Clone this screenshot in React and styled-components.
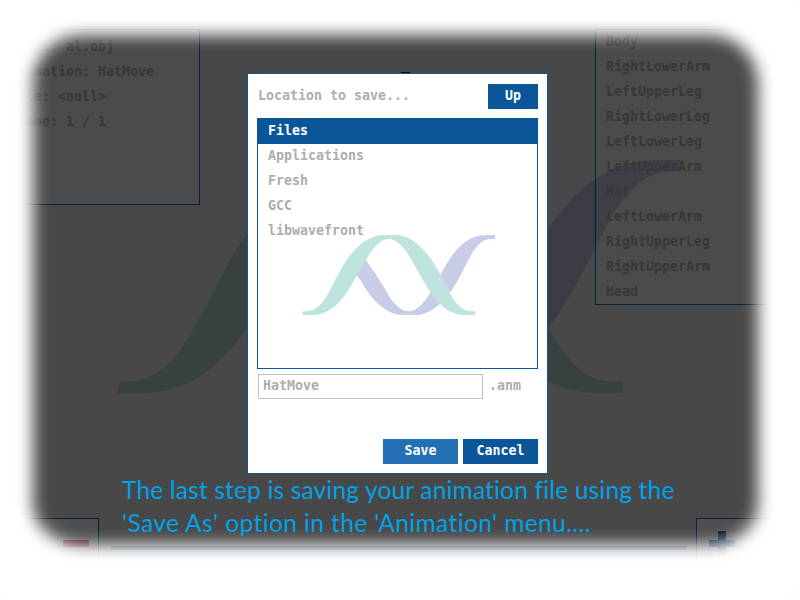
import React from 'react';
import styled, { createGlobalStyle } from 'styled-components';

const Global = createGlobalStyle`
  * { box-sizing: border-box; }
  body { margin: 0; background: #fff; }
`;

const Page = styled.main`
  position: relative;
  width: 800px;
  height: 600px;
  overflow: hidden;
  background: #fff;
  font: bold 13.29px/23px "DejaVu Sans Mono", monospace;
`;

const Editor = styled.section`
  position: relative;
  height: 600px;
  display: flex;
  flex-direction: column;
  justify-content: space-between;
  padding-top: 29px;
  background: #484848;
`;

const PanelRow = styled.div`
  display: flex;
  justify-content: space-between;
  align-items: flex-start;
`;

const Panel = styled.div`
  position: relative;
  width: ${(p) => p.$width}px;
  height: ${(p) => p.$height}px;
  padding: ${(p) => p.$pad};
  border: 1px solid #04203a;
  background: rgba(255, 255, 255, 0.02);
  color: #373737;
  white-space: pre;
`;

const Line = styled.div`
  height: 25px;
  line-height: 24px;
`;

const BottomRow = styled.div`
  display: flex;
  height: 82px;
`;

const ZoomBox = styled.div`
  width: ${(p) => p.$width}px;
  padding: ${(p) => p.$pad};
  border: 1px solid #04203a;
  background: rgba(255, 255, 255, 0.04);
`;

const Track = styled.div`
  flex: 1;
  height: 4px;
  margin: 28px 9px 0 12px;
  background: #0a2238;
`;

const Fade = styled.div`
  position: absolute;
  inset: -48px -41px -36px -50px;
  border: solid #fff;
  border-width: 83px 83px 91px 83px;
  border-radius: 132px;
  box-shadow: 0 0 0 100px #fff;
  filter: blur(8px);
`;

const BackdropWave = styled.div`
  position: absolute;
  left: 116.5px;
  top: 159.7px;
  svg { display: block; }
`;

const Marker = styled.div`
  position: absolute;
  left: 401px;
  top: 72px;
  width: 9px;
  height: 2px;
  background: #0a0a2c;
`;

const Dialog = styled.section`
  position: absolute;
  left: 247px;
  top: 73px;
  width: 301px;
  height: 401px;
  padding: 10px 9px 9px;
  display: flex;
  flex-direction: column;
  border: 1px solid #0a5699;
  background: #fff;
  color: #adadad;
`;

const DialogHead = styled.header`
  display: flex;
  justify-content: space-between;
  height: 25px;
  padding-left: 1px;
  margin-bottom: 9px;
`;

const Button = styled.button`
  width: ${(p) => p.$width}px;
  height: 25px;
  padding: 0 0 2px;
  border: 0;
  background: ${(p) => (p.$active ? '#2370b5' : '#0a5699')};
  color: #fff;
  font: inherit;
  text-align: center;
`;

const FileList = styled.div`
  position: relative;
  height: 251px;
  border: 1px solid #0a5699;
`;

const FileRow = styled.div`
  position: relative;
  height: 25px;
  padding-left: 10px;
  background: ${(p) => (p.$selected ? '#0a5699' : 'transparent')};
  color: ${(p) => (p.$selected ? '#fff' : 'inherit')};
`;

const ListWave = styled.div`
  position: absolute;
  left: 43.7px;
  top: 115.6px;
  svg { display: block; }
`;

const NameRow = styled.div`
  display: flex;
  margin-top: 5px;
  padding-left: 1px;
  gap: 6px;
`;

const NameInput = styled.input`
  width: 225px;
  height: 25px;
  padding: 0 4px 2px;
  border: 1px solid #c0c0c0;
  border-radius: 0;
  outline: 0;
  color: inherit;
  background: #fff;
  font: inherit;
  line-height: 21px;
`;

const Actions = styled.footer`
  display: flex;
  justify-content: flex-end;
  gap: 5px;
  margin-top: auto;
`;

const Caption = styled.p`
  position: absolute;
  left: 122px;
  top: 473px;
  margin: 0;
  color: #00a2e8;
  font: 400 24.5px/33px Lato, sans-serif;
  font-variant-ligatures: none;
  white-space: nowrap;
`;

const CaptionLine = styled.span`
  display: block;
  letter-spacing: ${(p) => p.$track}px;
`;

function Wave({ width, height, green, purple }) {
  return (
    <svg width={width} height={height} viewBox="185 44 580 241" preserveAspectRatio="none">
      <path
        fill={purple}
        d="M352 150 L347 162 L360 179 C400 251 445 285 490 285 H525 C565 285 613 251 653 179 C682 129 705 56 752 56 H765 V44 H740 C685 44 650 79 620 129 C600 164 588 186 573 211 C550 253 525 273 505 273 C485 273 460 253 437 211 C422 186 410 164 390 139 L376 116 Z"
      />
      <path
        fill={green}
        d="M188 273 H198 C248 273 271 200 300 150 C340 78 385 44 430 44 H465 C508 44 553 78 593 150 C622 200 645 273 692 273 H705 V285 H680 C625 285 590 250 560 200 C540 165 528 143 513 118 C490 76 465 56 445 56 C425 56 400 76 377 118 C362 143 350 165 330 200 C300 250 265 285 210 285 H185 Z"
      />
    </svg>
  );
}

const info = ['Model: al.obj', 'Animation: HatMove', 'File: <null>', 'Frame: 1 / 1'];
const parts = ['Body', 'RightLowerArm', 'LeftUpperLeg', 'RightLowerLeg', 'LeftLowerLeg', 'LeftUpperArm', 'Hat', 'LeftLowerArm', 'RightUpperLeg', 'RightUpperArm', 'Head'];
const files = ['Files', 'Applications', 'Fresh', 'GCC', 'libwavefront'];

export default function App() {
  return (
    <Page>
      <Global />
      <Editor>
        <BackdropWave>
          <Wave width={564.5} height={233} green="#37423f" purple="#3b3b44" />
        </BackdropWave>
        <PanelRow>
          <Panel $width={200} $height={176} $pad="5px 9px">
            {info.map((t) => <Line key={t}>{t}</Line>)}
          </Panel>
          <Panel $width={205} $height={276} $pad="0 10px">
            {parts.map((t) => <Line key={t}>{t}</Line>)}
          </Panel>
        </PanelRow>
        <BottomRow>
          <ZoomBox $width={99} $pad="21px 0 0 62px">
            <svg width="26" height="7" display="block"><path fill="#340a0c" d="M0 0h26v7H0z" /></svg>
          </ZoomBox>
          <Track />
          <ZoomBox $width={104} $pad="12px 0 0 12px">
            <svg width="26" height="25" display="block"><path fill="#041b33" d="M9 0h8v9h9v7h-9v9H9v-9H0V9h9z" /></svg>
          </ZoomBox>
        </BottomRow>
        <Fade />
        <Marker />
      </Editor>
      <Dialog>
        <DialogHead>
          <span>Location to save...</span>
          <Button $width={50}>Up</Button>
        </DialogHead>
        <FileList>
          <ListWave>
            <Wave width={193.3} height={80.3} green="#bfe4de" purple="#c9cce6" />
          </ListWave>
          {files.map((f, i) => <FileRow key={f} $selected={i === 0}>{f}</FileRow>)}
        </FileList>
        <NameRow>
          <NameInput defaultValue="HatMove" />
          <span>.anm</span>
        </NameRow>
        <Actions>
          <Button $width={75} $active>Save</Button>
          <Button $width={75}>Cancel</Button>
        </Actions>
      </Dialog>
      <Caption>
        <CaptionLine $track={0.17}>The last step is saving your animation file using the</CaptionLine>
        <CaptionLine $track={0.4}>'Save As' option in the 'Animation' menu....</CaptionLine>
      </Caption>
    </Page>
  );
}
